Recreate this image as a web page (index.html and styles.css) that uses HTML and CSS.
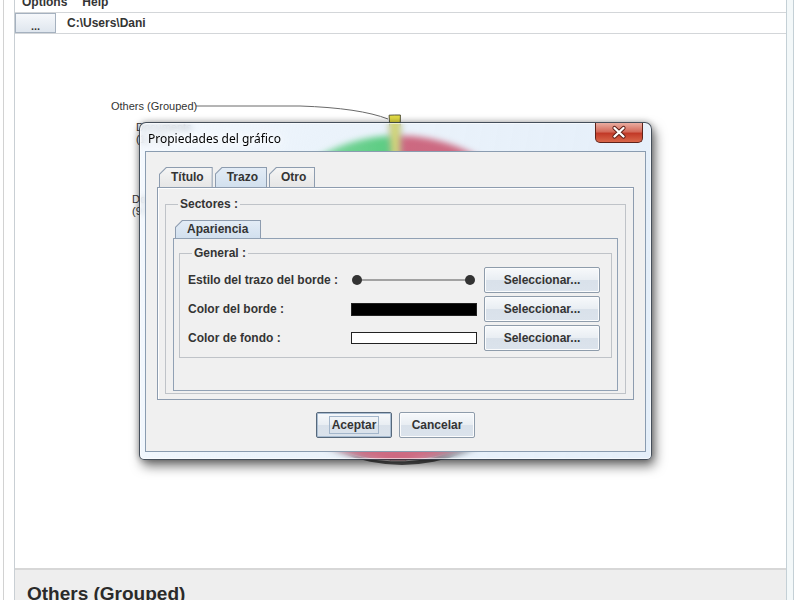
FILE: index.html
```html
<!DOCTYPE html>
<html lang="es">
<head>
  <meta charset="UTF-8" />
  <title>Gráfico</title>
  <link rel="stylesheet" href="styles.css">
</head>
<body>
  <div class="app">
    <div class="menubar">
      <span>Options</span>
      <span>Help</span>
    </div>

    <div class="pathbar">
      <button class="browse">...</button>
      <span class="path">C:\Users\Dani</span>
    </div>

    <div class="chart">
      <svg class="plot" width="771" height="534" viewBox="15 34 771 534">
        <circle cx="402" cy="302" r="163" fill="#5e5e5e"/>
        <path d="M398 298 L400.8 135 A163 163 0 1 1 244.8 353.7 Z" fill="#d63a50" stroke="#fff"/>
        <path d="M398 298 L244.8 353.7 A163 163 0 0 1 389.5 135.2 Z" fill="#30c850" stroke="#fff"/>
        <path d="M397.6 275 L389.1 115.2 A163 163 0 0 1 400.4 115 Z" fill="#e3dc45" stroke="#4a4a30" stroke-width="0.9"/>
        <path d="M196 106 L300 106 Q360 108 388 119" fill="none" stroke="#6a6a6a"/>
        <text class="label" x="111" y="110">Others (Grouped)</text>
        <text class="label" x="136" y="131">Documents</text>
        <text class="label" x="136" y="143">(12 %)</text>
        <text class="label" x="132" y="203">Downloads</text>
        <text class="label" x="132" y="215">(9 %)</text>
      </svg>
    </div>

    <div class="details">
      <h3>Others (Grouped)</h3>
    </div>
  </div>

  <div class="dialog">
    <div class="titlebar">
      <span class="title">Propiedades del gráfico</span>
      <button class="close">
        <svg width="46" height="19" viewBox="0 0 46 19">
          <path d="M18.5 5 L27.5 13.5 M27.5 5 L18.5 13.5" stroke="#5b1d15" stroke-width="4.2" stroke-linecap="round"/>
          <path d="M18.5 5 L27.5 13.5 M27.5 5 L18.5 13.5" stroke="#fff" stroke-width="2.4" stroke-linecap="round"/>
        </svg>
      </button>
    </div>

    <div class="dialog-body">
      <div class="tabs">
        <span class="tab"><span>Título</span></span>
        <span class="tab selected"><span>Trazo</span></span>
        <span class="tab"><span>Otro</span></span>
      </div>
      <div class="pane outer">
        <fieldset class="group sectores">
          <legend>Sectores :</legend>
          <div class="tabs inner-tabs">
            <span class="tab selected wide"><span>Apariencia</span></span>
          </div>
          <div class="pane inner">
            <fieldset class="group general">
              <legend>General :</legend>
              <div class="rows">
                <span>Estilo del trazo del borde :</span>
                <svg class="stroke" width="126" height="14" viewBox="0 0 126 14">
                  <line x1="6" y1="7" x2="119" y2="7" stroke="#555" stroke-width="1"/>
                  <circle cx="6" cy="7" r="5" fill="#333"/>
                  <circle cx="119" cy="7" r="5" fill="#333"/>
                </svg>
                <button class="btn">Seleccionar...</button>

                <span>Color del borde :</span>
                <span class="swatch black"></span>
                <button class="btn">Seleccionar...</button>

                <span>Color de fondo :</span>
                <span class="swatch white"></span>
                <button class="btn">Seleccionar...</button>
              </div>
            </fieldset>
          </div>
        </fieldset>
      </div>

      <div class="actions">
        <button class="btn default"><span class="focus">Aceptar</span></button>
        <button class="btn">Cancelar</button>
      </div>
    </div>
  </div>
</body>
</html>
```

FILE: styles.css
```css
* {
  box-sizing: border-box;
}
html, body {
  margin: 0;
  height: 600px;
  overflow: hidden;
}
body {
  position: relative;
  background: #fff;
  font-family: "Liberation Sans", Arial, sans-serif;
  font-size: 12px;
  font-weight: bold;
  color: #343434;
}

/* main window */
.app {
  margin-left: 14px;
  width: 773px;
  height: 600px;
  display: flex;
  flex-direction: column;
  border-left: 1px solid #c9cfd4;
  border-right: 1px solid #c4d0d6;
  box-shadow: -10px 0 0 #fff, -11px 0 0 #d2d2d2, 6px 0 0 #f3f8f9, 7px 0 0 #c4d0d6;
}
.menubar {
  height: 13px;
  border-bottom: 1px solid #d3d6d9;
  display: flex;
  gap: 15px;
  padding-left: 7px;
  overflow: hidden;
}
.menubar span {
  line-height: 14px;
  margin-top: -5px;
}
.pathbar {
  height: 21px;
  border-bottom: 1px solid #d3d6d9;
  display: flex;
}
.browse {
  width: 41px;
  border: 1px solid #a5b1bf;
  background: linear-gradient(#f6f8fb, #dfe6ee);
  font: bold 11px "Liberation Sans", Arial, sans-serif;
  color: #333;
  padding: 5px 0 0;
}
.path {
  margin-left: 11px;
  line-height: 20px;
}
.chart {
  flex: 1;
  overflow: hidden;
}
.plot {
  display: block;
}
.label {
  font: normal 11px "Liberation Sans", Arial, sans-serif;
  fill: #333;
}
.details {
  height: 32px;
  flex-shrink: 0;
  border-top: 2px solid #d7d7d7;
  background: #eeeeee;
  padding: 13px 0 0 12px;
  overflow: hidden;
}
.details h3 {
  margin: 0;
  font-size: 19px;
  line-height: 22px;
  color: #2a2a2a;
}

/* dialog window */
.dialog {
  position: absolute;
  left: 139px;
  top: 122px;
  width: 513px;
  height: 338px;
  display: flex;
  flex-direction: column;
  padding: 0 5px 7px;
  border: 1px solid rgba(28, 38, 50, 0.8);
  border-radius: 7px 7px 5px 5px;
  background: linear-gradient(100deg, rgba(240, 246, 253, 0.72) 0%, rgba(215, 231, 247, 0.5) 30%, rgba(185, 212, 240, 0.3) 45%, rgba(185, 212, 240, 0.38) 100%);
  backdrop-filter: blur(3px);
  box-shadow: 0 0 7px rgba(0, 0, 0, 0.3), 3px 6px 12px rgba(0, 0, 0, 0.55), inset 0 0 0 1px rgba(255, 255, 255, 0.6);
}
.titlebar {
  height: 28px;
  display: flex;
  justify-content: space-between;
  align-items: flex-start;
}
.title {
  font-family: "Noto Sans", "Liberation Sans", sans-serif;
  font-weight: normal;
  font-size: 12px;
  line-height: 16px;
  color: #000;
  padding: 8px 0 0 3px;
  text-shadow: 0 0 6px #fff, 0 0 10px #fff;
}
.close {
  width: 48px;
  height: 20px;
  margin-right: 3px;
  padding: 0;
  border: 1px solid #5e2219;
  border-top: none;
  border-radius: 0 0 5px 5px;
  background: linear-gradient(#e9ada1, #d46b5b 45%, #c23a28 55%, #d9674a);
}
.close svg {
  display: block;
}
.dialog-body {
  flex: 1;
  background: #f0f0f0;
  border: 1px solid #8a9cb0;
  padding: 15px 11px 0 11px;
}

/* tabs */
.tabs {
  display: flex;
  gap: 2px;
  padding-left: 2px;
  height: 20px;
}
.tab {
  display: block;
  padding: 1px 1px 0 1px;
  background: #8d9caf;
  clip-path: polygon(0 100%, 0 7px, 7px 0, 100% 0, 100% 100%);
}
.tab span {
  display: block;
  height: 19px;
  line-height: 19px;
  padding: 0 8px 0 11px;
  background: linear-gradient(#f5f5f5, #e6e6e6);
  clip-path: polygon(0 100%, 0 6.6px, 6.6px 0, 100% 0, 100% 100%);
}
.tab.selected span {
  background: linear-gradient(#e3ecf6, #d2e0ee);
}
.tab.wide span {
  width: 84px;
  height: 17px;
  line-height: 17px;
}
.pane {
  background: #f0f0f0;
  border: 1px solid #8d9caf;
}
.pane.outer {
  height: 213px;
  box-shadow: inset 1px 1px 0 #fff;
}
.pane.inner {
  height: 153px;
  border-color: #91a1b4;
}
.inner-tabs {
  height: 18px;
  margin-top: 9px;
  padding-left: 2px;
}

/* titled borders */
.group {
  margin: 0;
  padding: 0 7px;
  border: 1px solid #bfc3c8;
}
.group legend {
  margin-left: 5px;
  padding: 0 2px;
  line-height: 14px;
}
.sectores {
  margin: 9px 7px 0 7px;
  height: 197px;
}
.general {
  margin: 7px 5px 0 5px;
  height: 112px;
  padding: 7px 9px 0 8px;
}
.general legend {
  margin-left: 4px;
}
.rows {
  display: grid;
  grid-template-columns: 156px 126px 116px;
  grid-auto-rows: 26px;
  column-gap: 7px;
  row-gap: 3px;
  align-items: center;
}
.stroke {
  display: block;
}
.swatch {
  display: block;
  height: 13px;
  border: 1px solid #222;
}
.swatch.black {
  background: #000;
}
.swatch.white {
  background: #fff;
  height: 12px;
}

/* buttons */
.btn {
  height: 26px;
  padding: 0;
  font: bold 12px "Liberation Sans", Arial, sans-serif;
  color: #343434;
  border: 1px solid #8e9cab;
  border-radius: 2px;
  background: linear-gradient(#f7f9fb, #e9eef3 48%, #d9e1ea 52%, #dbe3ec);
  box-shadow: inset 0 0 0 1px #fbfcfd;
}
.actions {
  display: flex;
  justify-content: center;
  gap: 7px;
  margin-top: 12px;
}
.actions .btn {
  width: 76px;
}
.btn.default {
  border-color: #56687b;
  box-shadow: inset 0 0 0 1px #a9bdd2;
}
.focus {
  border: 1px solid #a3b6cb;
  padding: 1px 2px;
}
```
